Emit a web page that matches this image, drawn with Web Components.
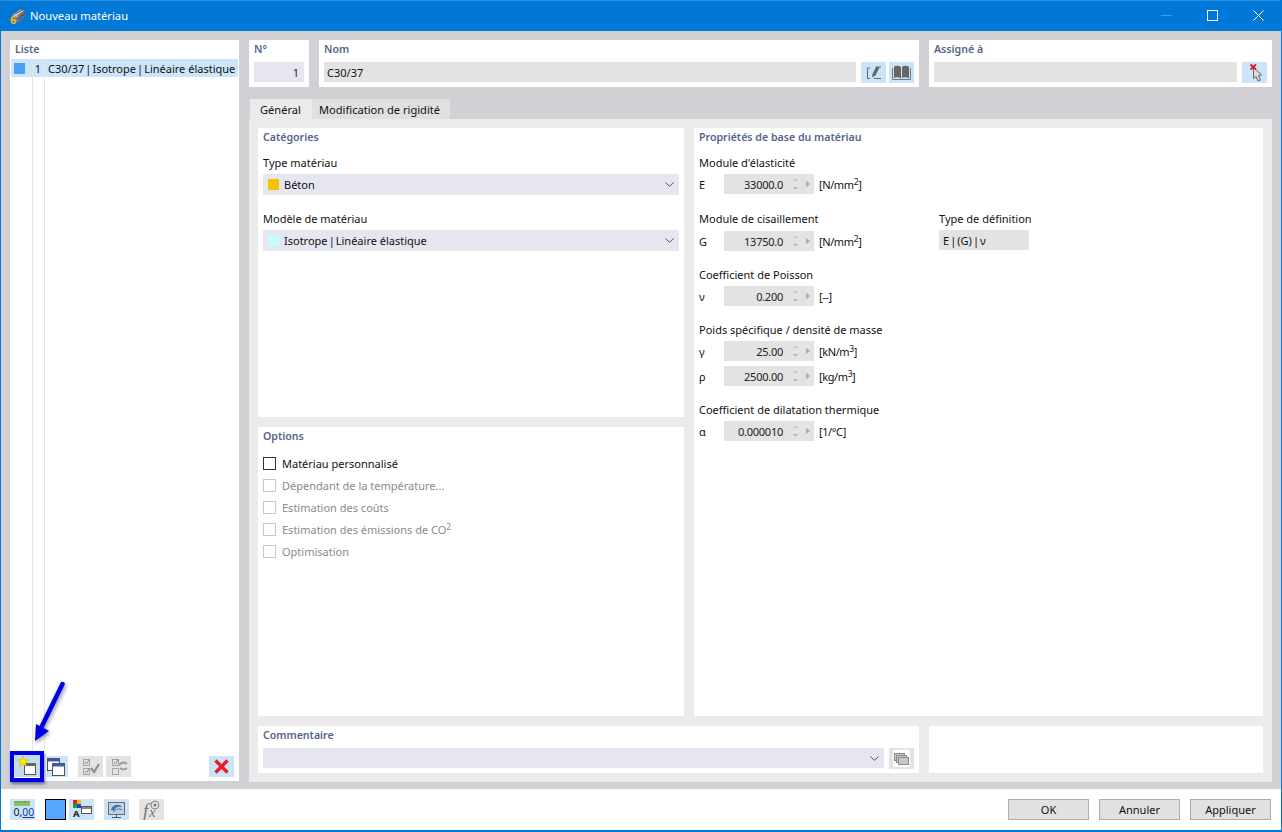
<!DOCTYPE html>
<html lang="fr"><head><meta charset="utf-8"><title>Nouveau matériau</title>
<style>
html,body{margin:0;padding:0;background:#fff}
body{font:11px "Noto Sans","Open Sans","Liberation Sans",sans-serif;color:#111;width:1282px;height:832px;overflow:hidden}
.sup{font-size:8.5px;vertical-align:4px;line-height:0}
.p{margin:0 -1.8px}
svg{display:block}
</style></head><body>
<template id="t-top"><style>
:host{display:flex;align-items:center;height:31px;background:#0078d7;color:#fff;font-size:11.2px;box-shadow:inset 0 1px 0 #2a8de0}
.ic{width:20px;height:20px;margin:0 2px 0 7px;position:relative}
.t{flex:1}
.b{display:flex;width:46px;height:31px;align-items:center;justify-content:center}
</style>
<div class="ic"><slot name="icon"></slot></div><div class="t"><slot></slot></div>
<div class="b"><svg width="11" height="11"><path d="M0 5.500H11" stroke="#3f9ae3"/></svg></div>
<div class="b"><svg width="11" height="11"><rect x=".5" y=".5" width="10" height="10" fill="none" stroke="#fff"/></svg></div>
<div class="b"><svg width="11" height="11"><path d="M.5 .5L10.500 10.500M10.500 .5L.5 10.500" stroke="#fff"/></svg></div>
</template>

<template id="t-panel"><style>
:host{display:flex;flex-direction:column;background:#fff;padding:0 5px;box-sizing:border-box;min-width:0}
.h{height:18px;line-height:18px;font-weight:600;color:#56658a;font-size:10.6px;flex:none}
:host([tight]) .h{height:22px}
</style><div class="h"><slot name="title"></slot></div><slot></slot></template>

<template id="t-ib"><style>
:host{display:block;width:25px;height:21px;background:#cbe4f9;flex:none}
:host([off]){background:#e3e3e3}
</style><slot></slot></template>

<template id="t-inp"><style>
:host{display:flex;align-items:center;height:20px;background:#e3e3e3;padding:0 3px;box-sizing:border-box;min-width:0;white-space:nowrap}
:host([lav]){background:#e6e6f0;justify-content:flex-end;color:#301040;padding-right:5px}
</style><div><slot></slot></div></template>

<template id="t-drop"><style>
:host{display:flex;align-items:center;height:21px;background:#e6e6f0;padding:0 5px 0 5px;box-sizing:border-box;min-width:0}
.s{width:11px;height:11px;margin-right:5px;background:var(--sw,transparent)}
.t{flex:1}
</style><div class="s"></div><div class="t"><slot></slot></div>
<svg width="9" height="5"><path d="M.5 .5L4.500 4.300L8.500 .5" fill="none" stroke="#555"/></svg></template>

<template id="t-spin"><style>
:host{display:flex;align-items:center;height:20px}
.y{width:25px}
.f{width:90px;height:20px;background:#e3e3e3;display:flex;align-items:center}
.v{width:59px;text-align:right;color:#222;letter-spacing:-.25px}
.u{margin-left:5px;white-space:nowrap;letter-spacing:-.4px}
svg{margin-left:5px}
</style><div class="y"></div><div class="f"><div class="v"></div>
<svg width="26" height="20"><path d="M5 7L7.500 4.500L10 7Z" fill="#c4c4c4"/><path d="M5 13L7.500 15.500L10 13Z" fill="#b4b4b4"/><path d="M18 7L22 10L18 13Z" fill="#aaa"/></svg>
</div><div class="u"><slot></slot></div></template>

<template id="t-chk"><style>
:host{display:flex;align-items:center;height:22px}
.b{width:11px;height:11px;border:1px solid #333;margin-right:6px;background:#fff}
:host([off]){color:#8a8a8a}
:host([off]) .b{border-color:#c8c8c8}
</style><div class="b"></div><div><slot></slot></div></template>

<template id="t-push"><style>
:host{display:flex;align-items:center;justify-content:center;width:81px;height:21px;background:#e1e1e1;border:1px solid #adadad;box-sizing:border-box;margin-left:10px}
</style><slot></slot></template>

<template id="t-app"><style>
:host{display:flex;flex-direction:column;width:1282px;height:832px;box-sizing:border-box;border:solid #0078d7;border-width:0 1px 2px 1px;position:relative;background:#fff}
.body{flex:none;height:758px;background:#d0d0d5;box-sizing:border-box;padding:9px 8px 8px 9px;display:grid;grid-template-columns:229px 1023px;column-gap:10px}
.foot{flex:1;display:flex;align-items:center;padding:0 9px 0 9px}
.right{display:flex;flex-direction:column;min-width:0}
</style><slot name="top"></slot><div class="body"><slot name="left"></slot><div class="right"><slot name="right"></slot></div></div><div class="foot"><slot name="foot"></slot></div><slot name="over"></slot></template>

<template id="t-list"><style>
:host{display:flex;flex-direction:column;background:#fff;padding-left:1px;box-sizing:border-box;height:741px}
.h{height:19px;line-height:18px;font-weight:600;font-size:10.6px;color:#56658a;padding-left:4px}
.g{flex:1;display:grid;grid-template-columns:22px 12px 1fr;margin-right:1px;min-height:0}
.c{border-right:1px solid #e6e6e6;height:100%}
.r{height:18px;background:#cce5fa;display:flex;align-items:center;white-space:pre}
.sw{width:11px;height:11px;background:#4a9ff5;margin-left:3px}
.n{justify-content:flex-end;padding-right:3px}
.l{padding-left:3px}
.p{margin:0 -1.8px}
.bar{height:31px;display:flex;align-items:flex-end;padding:0 5px 4px 3px;box-sizing:border-box;flex:none}
</style><div class="h">Liste</div><div class="g">
<div class="c"><div class="r"><div class="sw"></div></div></div>
<div class="c"><div class="r n">1</div></div>
<div><div class="r l"><span>C30/37 <span class="p">|</span> Isotrope <span class="p">|</span> Linéaire élastique</span></div></div></div>
<div class="bar"><slot></slot></div></template>

<template id="t-tabs"><style>
:host{display:flex;height:20px;margin-top:12px;flex:none;font-size:11.1px}
.a,.b{display:flex;align-items:center;height:20px;box-sizing:border-box}
.a{width:62px;background:#ebebeb;margin-left:1px;padding-left:10px}
.b{width:138px;background:#e0e0e0;padding-left:7px}
</style><div class="a">Général</div><div class="b">Modification de rigidité</div></template>

<template id="t-page"><style>
:host{display:flex;flex-direction:column;flex:1;background:#ebebeb;padding:9px;gap:10px;box-sizing:border-box;min-height:0}
.u{display:grid;grid-template-columns:426px 569px;grid-template-rows:289px 289px;gap:10px}
.l{display:grid;grid-template-columns:661px 334px;gap:10px;height:47px}
</style><div class="u"><slot name="cat"></slot><slot name="prop"></slot><slot name="opt"></slot></div><div class="l"><slot name="com"></slot><slot name="blank"></slot></div></template>

<script>
const def=(n,t)=>customElements.define(n,class extends HTMLElement{
 constructor(){super();this.attachShadow({mode:'open'}).appendChild(document.getElementById(t).content.cloneNode(true));}
 connectedCallback(){
  const s=this.shadowRoot;
  if(n==='spin-field'){s.querySelector('.y').textContent=this.getAttribute('sym');s.querySelector('.v').textContent=this.getAttribute('val');}
  if(n==='drop-down'&&this.hasAttribute('sw'))this.style.setProperty('--sw',this.getAttribute('sw'));
 }});
[['app-window','t-app'],['title-bar','t-top'],['panel-box','t-panel'],['icon-btn','t-ib'],['text-input','t-inp'],['drop-down','t-drop'],['spin-field','t-spin'],['check-row','t-chk'],['push-btn','t-push'],['list-panel','t-list'],['tab-strip','t-tabs'],['tab-page','t-page']].forEach(a=>def(...a));
</script>
<style>
.lb{height:18px;line-height:18px;white-space:nowrap}
.top{display:grid;grid-template-columns:60px 600px 343px;gap:10px;height:47px;flex:none}
.row{display:flex;gap:5px}
.grow{flex:1}
.m16{margin-top:16px}.m15{margin-top:15px}.m8{margin-top:8px}.m2{margin-top:2px}.m3{margin-top:3px}.m5{margin-top:5px}
.chk{margin-top:7px}
</style>

<app-window>
 <title-bar slot="top">
  <svg slot="icon" width="20" height="20" viewBox="0 0 20 20"><path d="M3 10L11 3.500L16 4L17.500 7L17 10L10 16.500L5 16Z" fill="#77777f"/><path d="M5 9L12 4L16 5L9.500 11Z" fill="#d4d4da"/><path d="M7 8L13.500 4.500M9 10L15.500 5.500M11 11L17 7M10 13.500L17 8.500" stroke="#4c4c54" fill="none"/></svg>
  <span style="position:absolute;left:2px;top:8px;font:bold 11px/12px 'Noto Sans',sans-serif;color:#f0b818" slot="icon">6</span>
  Nouveau matériau
 </title-bar>

 <list-panel slot="left">
  <icon-btn style="width:27px;height:22px;background:#c5dbe9"><svg width="27" height="22"><rect x="10.500" y="8.500" width="11" height="11" fill="#fff" stroke="#555"/><rect x="10" y="8" width="12" height="3" fill="#666"/><path d="M9 1L10.500 5H14.500L11.500 7.500L12.500 11.500L9 9L5.500 11.500L6.500 7.500L3.500 5H7.500Z" fill="#f6f000" stroke="#b8a800" stroke-width=".5"/></svg></icon-btn>
  <icon-btn style="margin-left:6px;width:21px"><svg width="21" height="21"><rect x="0.500" y="2.500" width="12" height="12" fill="#fff" stroke="#555"/><rect x="1" y="3" width="11" height="2.500" fill="#3a58b8"/><rect x="5.500" y="7.500" width="12" height="12" fill="#fff" stroke="#555"/><rect x="6" y="8" width="11" height="2.500" fill="#3a58b8"/></svg></icon-btn>
  <icon-btn off style="margin-left:10px"><svg width="25" height="21"><g fill="none" stroke="#a5a5a5"><rect x="5.500" y="3.500" width="6" height="6"/><rect x="5.500" y="12.500" width="6" height="6"/></g><path d="M7 6L8.500 8L11 3.500M7 15L8.500 17L11 12.500" fill="none" stroke="#8f8f8f"/><path d="M13 12L16 16L21 8" fill="none" stroke="#8f8f8f" stroke-width="2.200"/></svg></icon-btn>
  <icon-btn off style="margin-left:3px"><svg width="25" height="21"><g fill="none" stroke="#a5a5a5"><rect x="6.500" y="3.500" width="6" height="6"/><rect x="6.500" y="12.500" width="6" height="6"/></g><path d="M8 6L9.500 8L12 3.500" fill="none" stroke="#8f8f8f"/><path d="M13 9C16 6 19 6 21 8M21 12C18 14 16 14 14 12" fill="none" stroke="#9a9a9a" stroke-width="1.800"/></svg></icon-btn>
  <span class="grow"></span>
  <icon-btn><svg width="25" height="21"><path d="M6.500 4.500L18.500 16.500M18.500 4.500L6.500 16.500" stroke="#ee1c25" stroke-width="3.400"/></svg></icon-btn>
 </list-panel>

 <div class="top" slot="right">
  <panel-box tight><span slot="title">N°</span><text-input lav>1</text-input></panel-box>
  <panel-box tight><span slot="title">Nom</span><div class="row"><text-input class="grow">C30/37</text-input>
   <icon-btn><svg width="25" height="21"><path d="M9 6H6.500V16.500H9M13 16.500H20M17.500 5H20" fill="none" stroke="#666"/><path d="M11 15.500L11.500 12L15.500 4L18.500 5.500L14.500 13.500Z" fill="#666"/></svg></icon-btn>
   <icon-btn style="margin-left:-2px"><svg width="25" height="21"><path d="M12 5C10 3.500 7 3.500 5 4.500V16C7 15 10 15 12 16.500C14 15 17 15 20 16V4.500C17 3.500 14 3.500 13 5Z" fill="#666"/><path d="M12.500 5V16.500" stroke="#cbe4f9"/><path d="M3.500 6V17.500H21.500V6" fill="none" stroke="#777"/></svg></icon-btn></div></panel-box>
  <panel-box tight><span slot="title">Assigné à</span><div class="row"><text-input class="grow"></text-input>
   <icon-btn><svg width="25" height="21"><path d="M11.500 5.500V16.500L14 14.500L16 19L18.500 18L16.500 13.500L19.500 13Z" fill="#dcdcdc" stroke="#666"/><path d="M8.500 2.500L14 7.500M14 2.500L8.500 7.500" stroke="#e8112d" stroke-width="1.800"/></svg></icon-btn></div></panel-box>
 </div>
 <tab-strip slot="right"></tab-strip>
 <tab-page slot="right">
  <panel-box slot="cat"><span slot="title">Catégories</span>
   <div class="lb m8">Type matériau</div><drop-down class="m2" sw="#f5c400">Béton</drop-down>
   <div class="lb m15">Modèle de matériau</div><drop-down class="m2" sw="#c8fbfb">Isotrope <span class="p">|</span> Linéaire élastique</drop-down>
  </panel-box>
  <panel-box slot="prop" style="grid-column:2;grid-row:1/3"><span slot="title">Propriétés de base du matériau</span>
   <div class="lb m8">Module d'élasticité</div>
   <spin-field class="m2" sym="E" val="33000.0">[N/mm<span class="sup">2</span>]</spin-field>
   <div class="row m16" style="gap:0">
    <div style="width:240px"><div class="lb">Module de cisaillement</div><spin-field class="m3" sym="G" val="13750.0">[N/mm<span class="sup">2</span>]</spin-field></div>
    <div><div class="lb">Type de définition</div><text-input class="m2" style="width:90px;padding-left:4px">E <span class="p">|</span> (G) <span class="p">|</span> ν</text-input></div>
   </div>
   <div class="lb m15">Coefficient de Poisson</div>
   <spin-field class="m2" sym="ν" val="0.200">[--]</spin-field>
   <div class="lb m15">Poids spécifique / densité de masse</div>
   <spin-field class="m2" sym="γ" val="25.00">[kN/m<span class="sup">3</span>]</spin-field>
   <spin-field class="m5" sym="ρ" val="2500.00">[kg/m<span class="sup">3</span>]</spin-field>
   <div class="lb m15">Coefficient de dilatation thermique</div>
   <spin-field class="m2" sym="α" val="0.000010">[1/°C]</spin-field>
  </panel-box>
  <panel-box slot="opt" style="grid-column:1;grid-row:2"><span slot="title">Options</span>
   <check-row class="chk">Matériau personnalisé</check-row>
   <check-row off>Dépendant de la température...</check-row>
   <check-row off>Estimation des coûts</check-row>
   <check-row off>Estimation des émissions de CO<span class="sup">2</span></check-row>
   <check-row off>Optimisation</check-row>
  </panel-box>
  <panel-box slot="com" tight><span slot="title">Commentaire</span><div class="row"><drop-down class="grow" style="height:20px"></drop-down>
   <icon-btn off><svg width="25" height="21"><rect x="4" y="2" width="17" height="17" fill="#fff"/><g fill="#c8c8c8" stroke="#8a8a8a"><rect x="5.500" y="5.500" width="10" height="7"/><rect x="7.500" y="7.500" width="10" height="7"/><rect x="9.500" y="9.500" width="10" height="7"/></g></svg></icon-btn></div></panel-box>
  <panel-box slot="blank"></panel-box>
 </tab-page>

 <icon-btn slot="foot"><svg width="25" height="21"><rect x="4" y="2" width="16" height="5" fill="#8cc063"/><path d="M6 2V4M9 2V4M12 2V4M15 2V4M18 2V4" stroke="#5c8f3c"/><text x="3.500" y="17" font-family="Noto Sans" font-size="10.500" fill="#222">0,<tspan fill="#1c3f9f" text-decoration="underline">00</tspan></text></svg></icon-btn>
 <span slot="foot" style="width:21px;height:21px;box-sizing:border-box;border:1px solid #000;background:#56a8ff;margin-left:10px;flex:none"></span>
 <icon-btn slot="foot" style="margin-left:3px"><svg width="25" height="21"><rect x="4" y="1" width="4" height="4" fill="#e02020"/><rect x="8" y="1" width="4" height="4" fill="#e0c020"/><rect x="4" y="5" width="4" height="4" fill="#20a030"/><rect x="8" y="5" width="4" height="4" fill="#2040d0"/><rect x="12.500" y="7.500" width="10" height="7" fill="#fff" stroke="#555"/><rect x="13" y="8" width="9" height="2" fill="#888"/><text x="4" y="18" font-family="Noto Sans" font-weight="700" font-size="9.500" fill="#222">A</text></svg></icon-btn>
 <icon-btn slot="foot" style="margin-left:10px"><svg width="25" height="21"><rect x="4.500" y="3.500" width="16" height="12" fill="#c3d2dd" stroke="#6c6c6c"/><path d="M7 11C8 6 14 4 18 8L14 8C12 8 11 10 10 12Z" fill="#3f75b8"/><path d="M10 13C12 10 15 9 18 11" stroke="#3f75b8" fill="none"/><path d="M12.500 15.500V18M8 18.500H17" stroke="#555"/></svg></icon-btn>
 <icon-btn slot="foot" off style="margin-left:10px"><svg width="25" height="21"><text x="4" y="18" font-family="Liberation Serif" font-style="italic" font-size="19" fill="#777">f</text><text x="10" y="18" font-family="Liberation Serif" font-style="italic" font-size="15" fill="#777">x</text><circle cx="16" cy="6" r="4" fill="none" stroke="#888"/><circle cx="16" cy="6" r="1.500" fill="#777"/></svg></icon-btn>
 <span slot="foot" class="grow" style="flex:1"></span>
 <push-btn slot="foot">OK</push-btn><push-btn slot="foot">Annuler</push-btn><push-btn slot="foot" style="margin-right:1px">Appliquer</push-btn>

 <div slot="over" style="position:absolute;left:9px;top:751px;width:34px;height:31px;box-sizing:border-box;border:4px solid #0000e6;box-shadow:1px 2px 3px rgba(0,0,60,.5)"></div>
 <svg slot="over" style="position:absolute;left:25px;top:678px;filter:drop-shadow(1px 2px 2px rgba(0,0,60,.45))" width="45" height="70"><path d="M36.500 6L16 48" stroke="#0000e6" stroke-width="4.500" stroke-linecap="round"/><path d="M9 63L10 46L23 53Z" fill="#0000e6"/></svg>
</app-window>
</body></html>
